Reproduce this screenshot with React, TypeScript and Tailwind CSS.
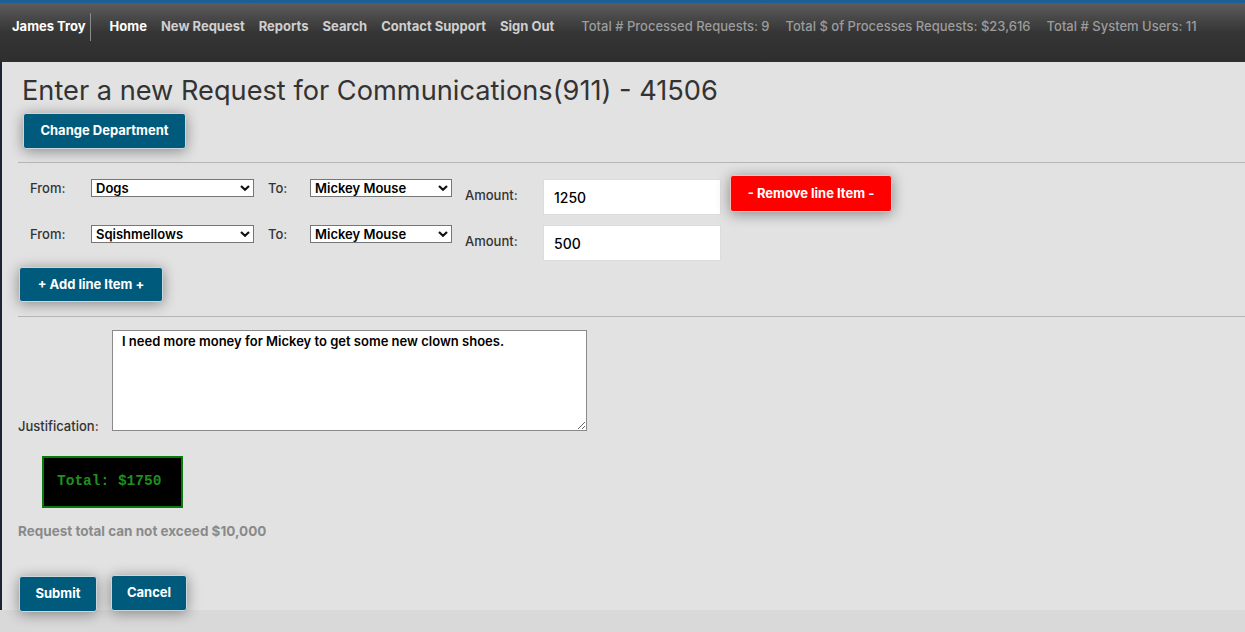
import React from "react"

const navItems = ["New Request", "Reports", "Search", "Contact Support", "Sign Out"]
const stats = [
  "Total # Processed Requests: 9",
  "Total $ of Processes Requests: $23,616",
  "Total # System Users: 11",
]

const font = { fontFamily: "Inter, 'Open Sans', sans-serif" }

function Chevron() {
  return (
    <svg
      className="pointer-events-none absolute right-[4px] top-1/2 -translate-y-1/2"
      width="10"
      height="7"
      viewBox="0 0 10 7"
    >
      <path d="M1 1.5 L5 5.2 L9 1.5" fill="none" stroke="#111" strokeWidth="2.2" />
    </svg>
  )
}

function FakeSelect({ value, width, first }: { value: string; width: string; first?: boolean }) {
  return (
    <div className={`relative h-[18px] ${first ? "mt-1" : ""} ${width}`}>
      <select
        defaultValue={value}
        className="block h-full w-full appearance-none border border-[#767676] bg-white pl-[4px] text-[13px] font-semibold leading-[16px] text-black outline-none"
      >
        <option>{value}</option>
      </select>
      <Chevron />
    </div>
  )
}

function BlueButton({ children, className = "" }: { children: React.ReactNode; className?: string }) {
  return (
    <button
      className={`block rounded-[3px] border border-[#c9d6dc] bg-[#005a7b] text-[13px] font-bold text-white shadow-[0_2px_14px_rgba(0,0,0,0.4)] ${className}`}
    >
      {children}
    </button>
  )
}

function LineItem({ from, amount, first }: { from: string; amount: string; first?: boolean }) {
  return (
    <div className="flex items-start pl-3">
      <div className={`${first ? "mt-1" : ""} w-[61px] text-[13px] font-medium leading-[18px] text-[#333]`}>From:</div>
      <FakeSelect value={from} width="w-[163px]" first={first} />
      <div className={`${first ? "mt-1" : ""} ml-[14px] w-[42px] text-[13px] font-medium leading-[18px] text-[#333]`}>To:</div>
      <FakeSelect value="Mickey Mouse" width="w-[142px]" first={first} />
      <div className={`${first ? "mt-[10px]" : "mt-[6px]"} ml-[13px] w-[78px] text-[13px] font-medium leading-[20px] text-[#333]`}>
        Amount:
      </div>
      <input
        defaultValue={amount}
        className={`${first ? "mt-1" : ""} block h-[36px] w-[178px] border border-[#dcdcdc] bg-white px-[10px] text-[14px] font-medium text-black outline-none`}
      />
      {first && (
        <button className="ml-[9px] h-[37px] w-[162px] rounded-[3px] border border-[#f3c0c0] bg-[#ff0000] text-[13px] font-bold text-white shadow-[0_2px_14px_rgba(0,0,0,0.4)]">
          - Remove line Item -
        </button>
      )}
    </div>
  )
}

export default function App() {
  return (
    <div className="min-h-[632px] w-[1245px] bg-[#d9d9d9]" style={font}>
      {/* top bar */}
      <div className="h-[62px] border-t-[3px] border-[#1d5f94] bg-gradient-to-b from-[#5c5c5c] via-[#353535] to-[#2e2e2e]">
        <div className="flex h-[48px] items-center text-[13px] font-bold">
          <div className="flex h-[28px] items-center border-r border-[#8a8a8a] pl-[12px] pr-[4px] text-white">
            James Troy
          </div>
          <div className="ml-[19px] text-white">Home</div>
          {navItems.map((n) => (
            <div key={n} className="ml-[14px] text-[#cfcfcf]">
              {n}
            </div>
          ))}
          <div className="ml-[27px] flex gap-[16px] font-medium text-[#9c9c9c]">
            {stats.map((s) => (
              <span key={s}>{s}</span>
            ))}
          </div>
        </div>
      </div>

      {/* body */}
      <div className="h-[548px] border-l-2 border-[#1b2533] bg-[#e2e2e2] pl-[16px]">
        <h1 className="pt-[13px] pl-[4px] text-[27.2px] leading-[32px] font-normal text-[#333]">
          Enter a new Request for Communications(911) - 41506
        </h1>
        <BlueButton className="ml-[5px] mt-[6px] h-[36px] w-[163px]">Change Department</BlueButton>

        <div className="mt-[13px] h-px bg-[#b5b5b5]" />

        <div className="mt-[12px] flex flex-col gap-[10px]">
          <LineItem from="Dogs" amount="1250" first />
          <LineItem from="Sqishmellows" amount="500" />
        </div>
        <BlueButton className="ml-[1px] mt-[6px] h-[35px] w-[144px]">+ Add line Item +</BlueButton>

        <div className="mt-[14px] h-px bg-[#b5b5b5]" />

        <div className="mt-[13px] flex items-end">
          <div className="-mb-[4px] w-[94px] text-[13px] font-medium leading-[18px] text-[#333]">Justification:</div>
          <textarea
            defaultValue="I need more money for Mickey to get some new clown shoes."
            className="block h-[101px] w-[475px] border border-[#8a8a8a] bg-white px-[9px] pt-px text-[13px] font-semibold text-black outline-none"
          />
        </div>

        <div
          className="ml-[24px] mt-[25px] flex h-[52px] w-[141px] items-center border-2 border-[#0b7a0b] bg-black pl-[13px] text-[14.5px] font-bold text-[#1f8f1f]"
          style={{ fontFamily: "'Liberation Mono', monospace" }}
        >
          Total: $1750
        </div>

        <p className="mt-[13px] text-[13.5px] font-bold leading-[20px] text-[#8a8a8a]">
          Request total can not exceed $10,000
        </p>

        <div className="mt-[34px] flex items-start gap-[14px]">
          <BlueButton className="ml-[1px] mt-px h-[36px] w-[78px]">Submit</BlueButton>
          <BlueButton className="h-[36px] w-[76px]">Cancel</BlueButton>
        </div>
      </div>
    </div>
  )
}
